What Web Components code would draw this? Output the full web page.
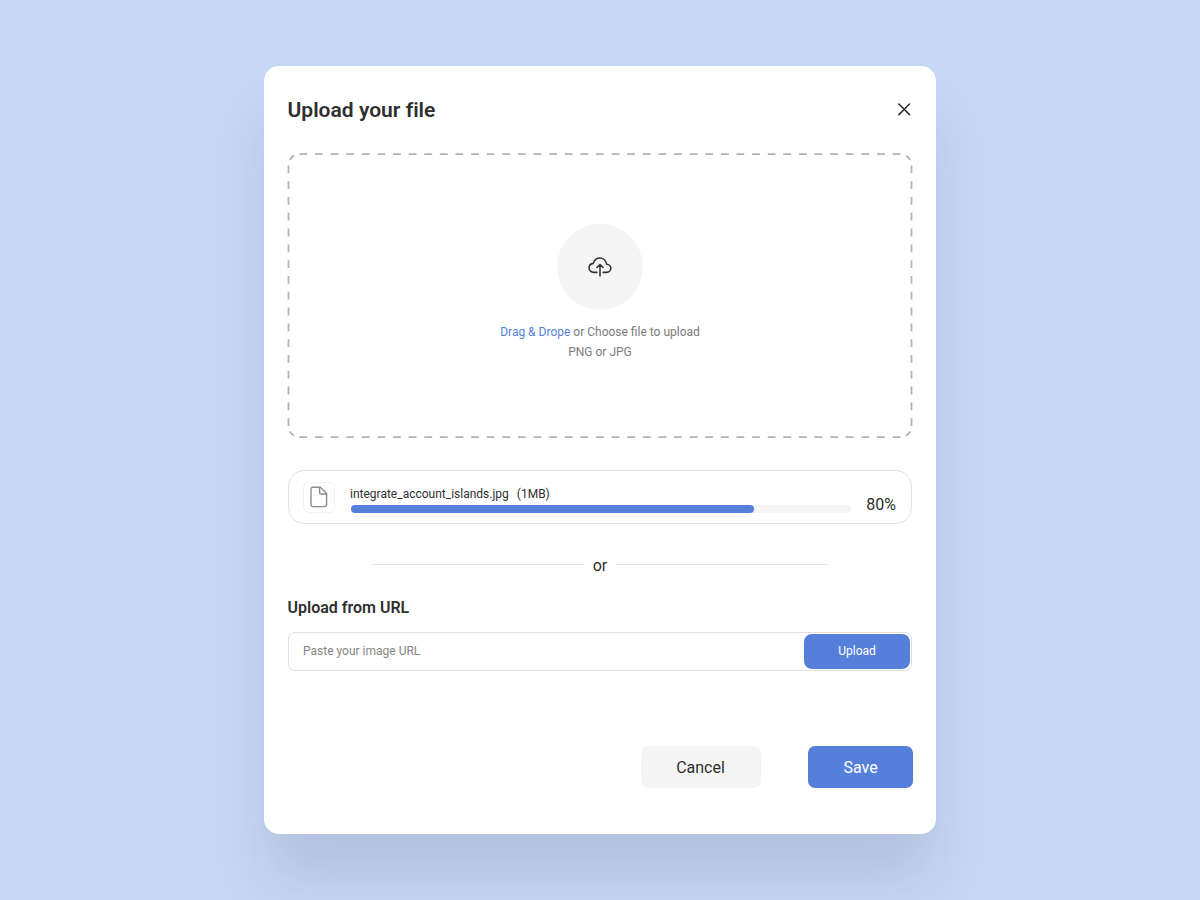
<!DOCTYPE html>
<html lang="en">
<head>
<meta charset="utf-8">
<title>Upload your file</title>
<style>
  html, body { margin: 0; height: 100%; }
  body {
    background: #c7d8f4;
    font-family: Roboto, "Liberation Sans", sans-serif;
    color: #2f2f2f;
    display: flex;
    justify-content: center;
    align-items: center;
    overflow: hidden;
  }
</style>
</head>
<body>
<upload-dialog heading="Upload your file">
  <drop-zone>
    <span slot="link">Drag &amp; Drope</span>
    <span slot="text">or Choose file to upload</span>
    <span slot="formats">PNG or JPG</span>
  </drop-zone>
  <file-progress name="integrate_account_islands.jpg" size="(1MB)" value="80"></file-progress>
  <or-divider>or</or-divider>
  <url-field label="Upload from URL" placeholder="Paste your image URL">Upload</url-field>
  <action-button slot="actions" kind="plain">Cancel</action-button>
  <action-button slot="actions" kind="primary">Save</action-button>
</upload-dialog>

<script>
class BaseElement extends HTMLElement {
  connectedCallback() {
    if (!this.shadowRoot) this.attachShadow({ mode: "open" }).innerHTML = this.render();
  }
  attr(name) { return this.getAttribute(name) || ""; }
}

customElements.define("upload-dialog", class extends BaseElement {
  render() {
    return `
    <style>
      :host { display: flex; flex-direction: column; box-sizing: border-box; width: 672px; height: 768px;
        padding: 24px 24px 46px; background: #fff; border-radius: 15px;
        box-shadow: 0 48px 60px -3px rgba(0, 20, 50, .115); }
      header { display: flex; align-items: center; justify-content: space-between; height: 39px; margin-bottom: 24px; }
      h1 { margin: 1px 0 0 -0.5px; font-size: 21px; font-weight: 600; line-height: 40px; letter-spacing: .02px; }
      button { all: unset; display: flex; margin: 0 1px 0 0; }
      footer { display: flex; justify-content: flex-end; gap: 47px; margin: auto -1px 0 0; }
    </style>
    <header>
      <h1>${this.attr("heading")}</h1>
      <button aria-label="Close"><svg width="14" height="14" viewBox="0 0 14 14" fill="none" stroke="#2d2d2d" stroke-width="1.5" stroke-linecap="round"><path d="M1.9 1 12.5 11.6M12.5 1 1.9 11.6"/></svg></button>
    </header>
    <slot></slot>
    <footer><slot name="actions"></slot></footer>`;
  }
});

customElements.define("drop-zone", class extends BaseElement {
  render() {
    return `
    <style>
      :host { display: grid; height: 286px; font-size: 12px; color: #7b7b7b; }
      .frame, .content { grid-area: 1 / 1; }
      .frame { overflow: visible; }
      .content { display: flex; flex-direction: column; align-items: center; padding-top: 71px; }
      .badge { width: 86px; height: 86px; border-radius: 50%; background: #f5f5f5; display: flex; align-items: center; justify-content: center; }
      p { margin: 0; line-height: 20px; white-space: nowrap; }
      p:first-of-type { margin-top: 12px; }
      .link { color: #567fd9; }
    </style>
    <svg class="frame" width="624" height="286" viewBox="0 0 624 286" fill="none" stroke="#b3b3b3" stroke-width="1.8">
      <path d="M11.4 1.2H612.7M11.4 284.2H612.7" stroke-dasharray="7.8 7.811"/>
      <path d="M.5 12.4V273M623.5 12.4V273" stroke-dasharray="7.8 8"/>
      <path d="M.5 12.4A11 11 0 0 1 11.4 1.2M612.6 1.2A11 11 0 0 1 623.5 12.4M623.5 273A11 11 0 0 1 612.6 284.2M11.4 284.2A11 11 0 0 1 .5 273" stroke-dasharray="0 5.7 6 6"/>
    </svg>
    <div class="content">
      <div class="badge"><svg width="24" height="20" viewBox="0 0 26 22" fill="none" stroke="#333" stroke-width="1.7" stroke-linecap="round" stroke-linejoin="round">
        <path d="M9.6 16.9H6.3C3.4 16.9 1 14.8 1 12C1 9.3 3 7.3 5.6 7C6.6 3.8 9.4 1.1 12.8 1.1C16.6 1.1 19.7 4.1 20.3 8C22.9 8.2 25 10.2 25 12.5C25 15 22.7 16.9 20.2 16.9H16.5"/>
        <path d="M13 20.8V8.7M9.6 11.6 13 8.2 16.4 11.6"/></svg></div>
      <p><span class="link"><slot name="link"></slot></span> <slot name="text"></slot></p>
      <p><slot name="formats"></slot></p>
    </div>`;
  }
});

customElements.define("file-progress", class extends BaseElement {
  render() {
    const value = this.attr("value");
    return `
    <style>
      :host { display: flex; box-sizing: border-box; height: 54px; margin-top: 31px; padding: 0 15px 0 14px;
        border: 1px solid #e2e2e2; border-radius: 16px; align-items: center; }
      .icon { box-sizing: border-box; width: 32px; height: 31px; border: 1px solid #f3f3f3; border-radius: 6px;
        display: flex; align-items: center; justify-content: center; }
      .main { flex: 1; margin: 4px 15.5px 0 16px; }
      .name { font-size: 12px; line-height: 16px; margin: 0 0 3px -1px; }
      .name span { margin-left: 8px; }
      .track { height: 8px; border-radius: 4px; background: #f5f5f5; }
      .fill { height: 8px; border-radius: 4px; background: #567fd9; width: calc(${value}% + 3px); }
      .value { font-size: 16px; padding-top: 15px; line-height: 18px; }
    </style>
    <div class="icon"><svg width="18" height="22" viewBox="0 0 18 22" fill="none" stroke="#8c8c8c" stroke-width="1.4" stroke-linejoin="round">
      <path d="M3 1.2H10.4L16.6 7.4V18.6A2 2 0 0 1 14.6 20.6H3A2 2 0 0 1 1 18.6V3.2A2 2 0 0 1 3 1.2Z"/><path d="M9.6 1.4V6.8A1.2 1.2 0 0 0 10.8 8H16.4" /></svg></div>
    <div class="main">
      <div class="name">${this.attr("name")}<span>${this.attr("size")}</span></div>
      <div class="track"><div class="fill"></div></div>
    </div>
    <div class="value">${value}%</div>`;
  }
});

customElements.define("or-divider", class extends BaseElement {
  render() {
    return `
    <style>
      :host { display: flex; align-items: center; justify-content: center; gap: 9px; margin-top: 32px; height: 20px; font-size: 16px; line-height: 20px; }
      i { width: 212px; height: 1px; background: #e4e4e4; margin-bottom: 3px; }
    </style><i></i><span><slot></slot></span><i></i>`;
  }
});

customElements.define("url-field", class extends BaseElement {
  render() {
    return `
    <style>
      :host { display: block; margin-top: 22px; }
      h2 { margin: 0 0 14px -0.5px; font-size: 16px; font-weight: 600; line-height: 20px; }
      .field { display: flex; align-items: center; box-sizing: border-box; height: 39px; padding: 0 1px 0 14px;
        border: 1px solid #e0e0e0; border-radius: 7px; font-size: 12px; }
      .hint { flex: 1; color: #858585; padding-bottom: 2px; }
      .go { box-sizing: border-box; width: 106px; height: 35px; padding-bottom: 2px; border-radius: 8px; background: #567fd9; color: #fff; display: flex; align-items: center; justify-content: center; }
    </style>
    <h2>${this.attr("label")}</h2>
    <div class="field"><span class="hint">${this.attr("placeholder")}</span><div class="go" role="button"><slot></slot></div></div>`;
  }
});

customElements.define("action-button", class extends BaseElement {
  render() {
    return `
    <style>
      :host { display: flex; align-items: center; justify-content: center; box-sizing: border-box; height: 42px; width: 105px; border-radius: 7px;
        font-size: 16px; background: #567fd9; color: #fff; }
      :host([kind="plain"]) { width: 120px; padding-right: 1px; background: #f5f5f5; color: #2f2f2f; }
    </style><slot></slot>`;
  }
});
</script>
</body>
</html>
